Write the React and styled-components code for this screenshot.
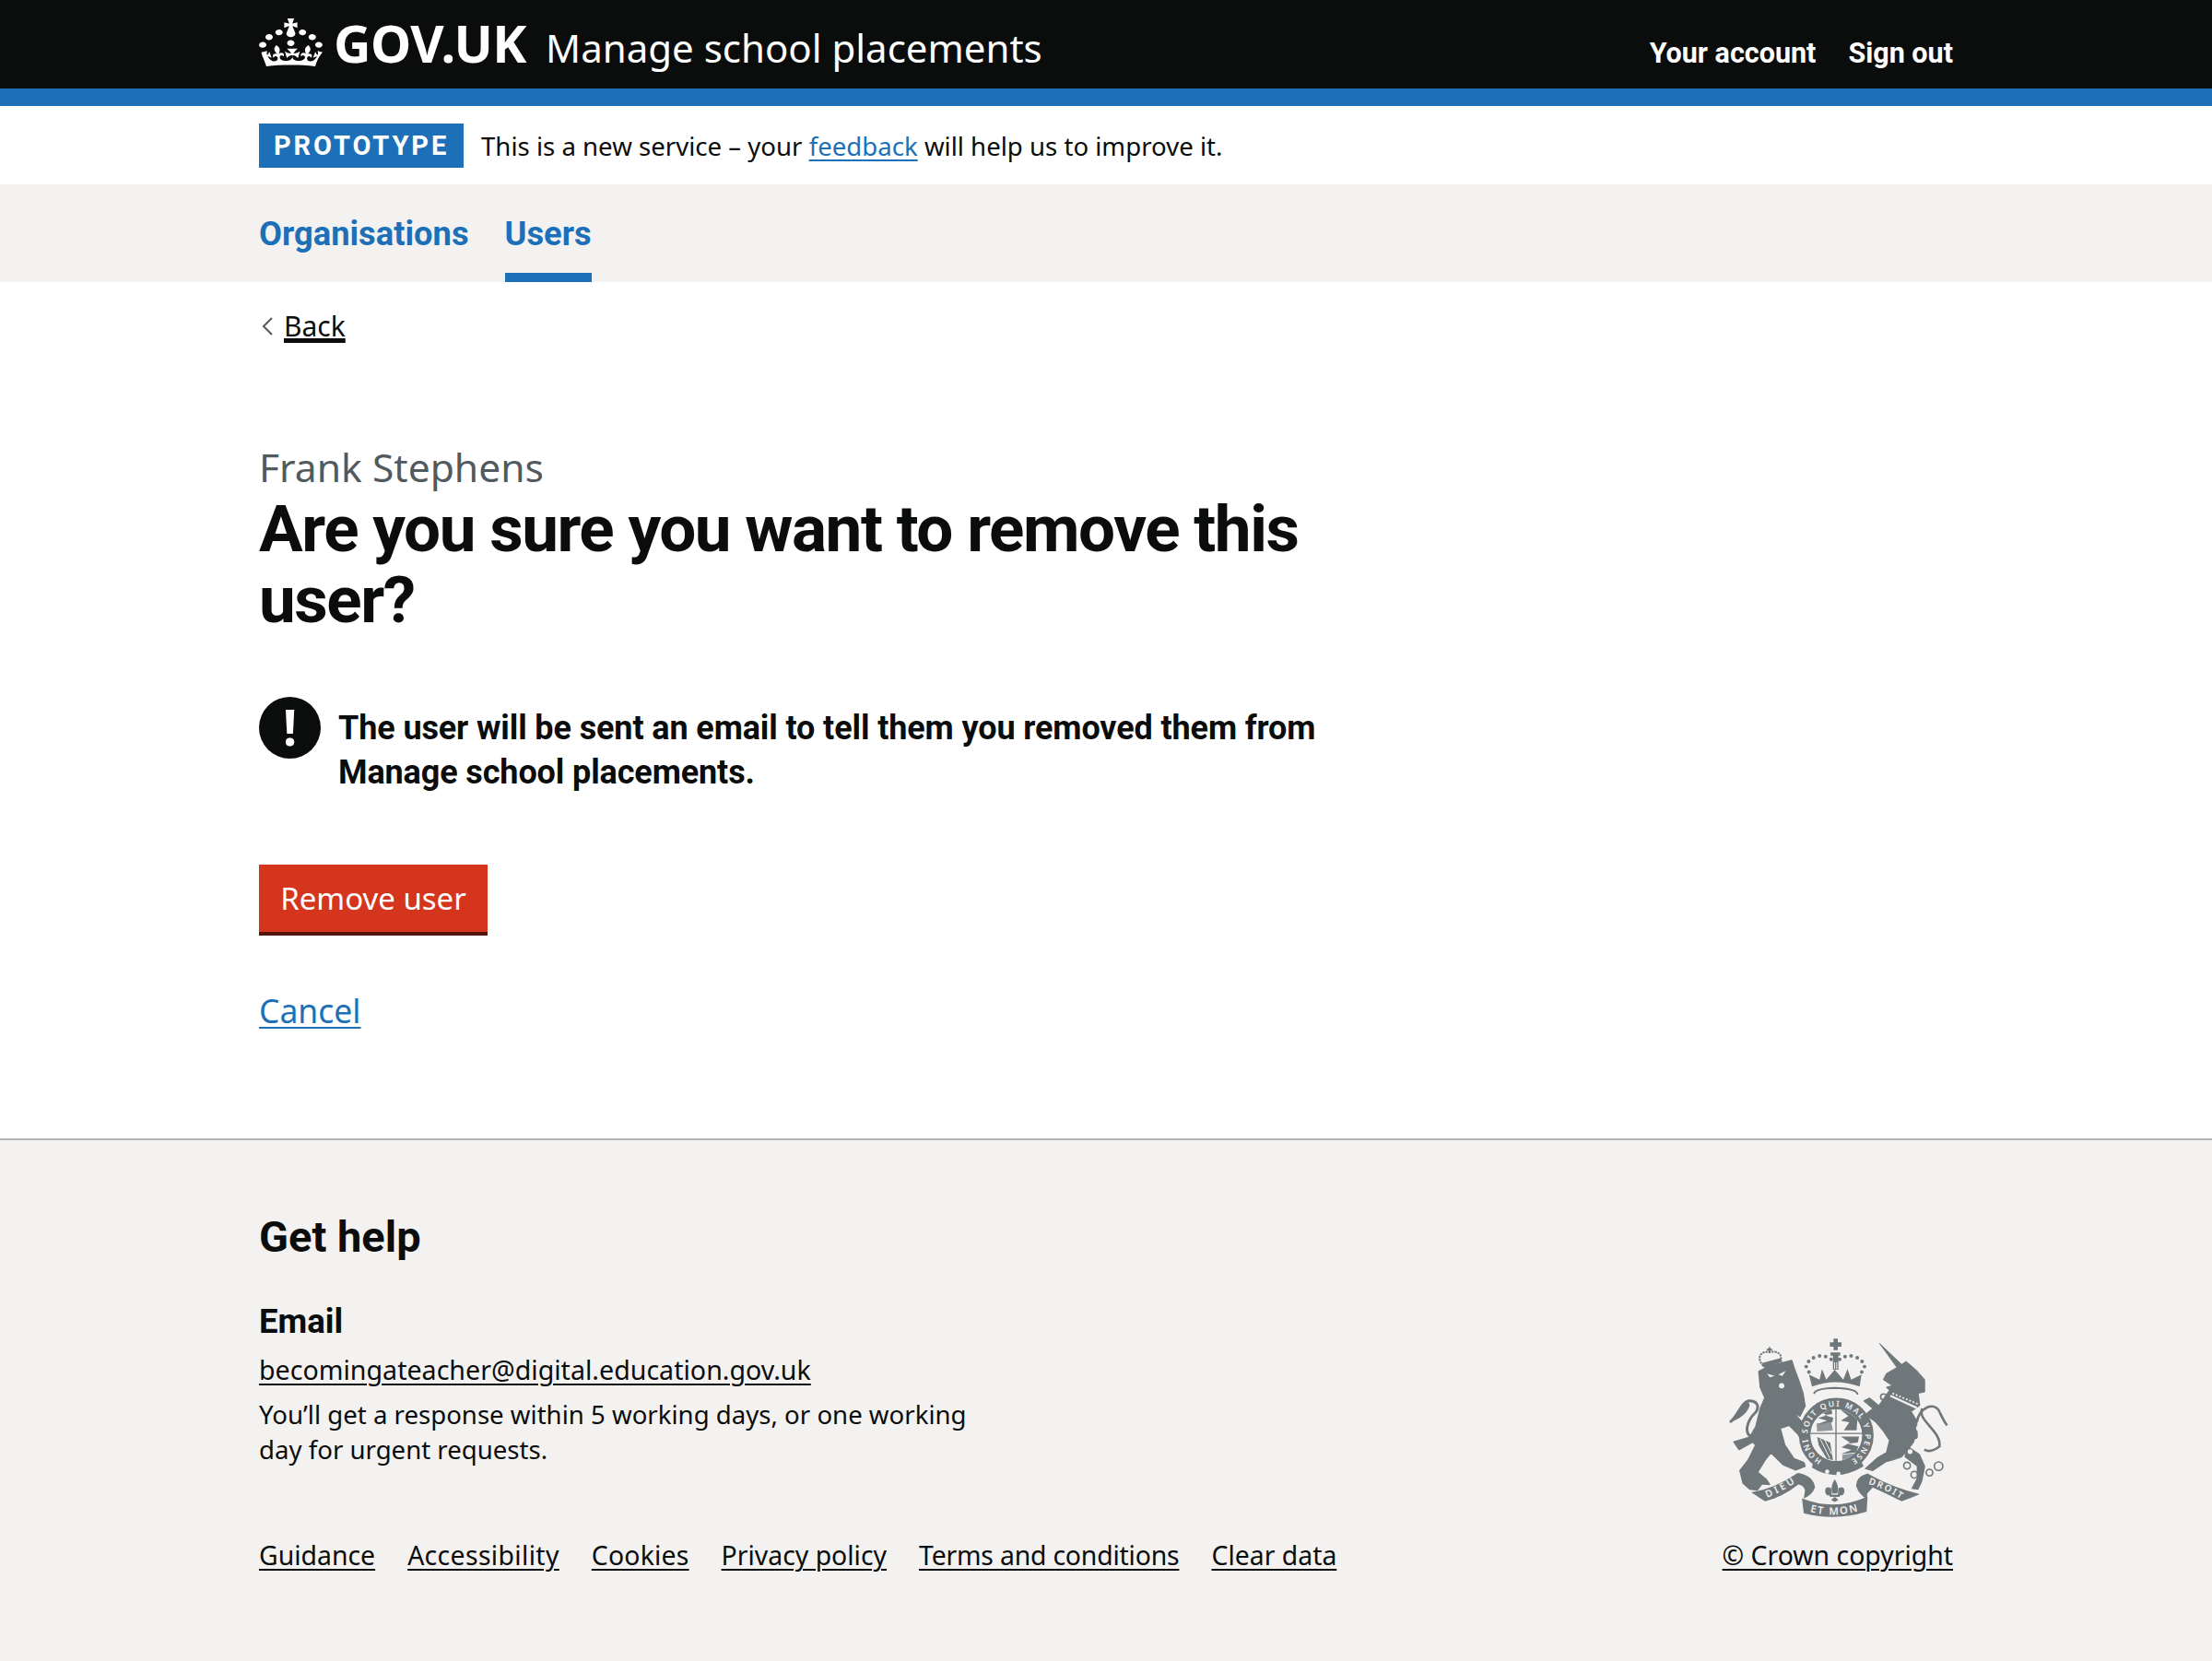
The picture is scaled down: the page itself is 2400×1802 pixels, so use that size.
import React from "react";
import styled, { createGlobalStyle } from "styled-components";

const BOLD = `"Roboto", "Noto Sans", sans-serif`;

const Global = createGlobalStyle`
  html, body { margin: 0; padding: 0; background: #fff; }
  body { font-family: "Noto Sans", "Liberation Sans", sans-serif; color: #0b0c0c; }
  * { box-sizing: border-box; }
`;
const Container = styled.div`
  width: 1838px;
  margin: 0 auto;
`;
const Header = styled.header`
  background: #0b0c0c;
  border-bottom: 19px solid #1d70b8;
  height: 115px;
`;
const HeaderInner = styled(Container)`
  height: 96px;
  display: flex;
  align-items: flex-start;
  justify-content: space-between;
`;
const Brand = styled.div`
  display: flex;
  align-items: flex-start;
  padding-top: 20px;
`;
const CrownSvg = styled.svg`
  width: 69px;
  height: 52px;
  display: block;
  margin-right: 12px;
`;
const LogoText = styled.span`
  font-weight: 700;
  font-size: 56px;
  line-height: 56px;
  color: #fff;
  letter-spacing: -0.5px;
  margin-top: -2px;
`;
const ServiceName = styled.span`
  font-size: 42px;
  line-height: 56px;
  color: #fff;
  margin-left: 21px;
  margin-top: 4px;
`;
const HeaderNav = styled.nav`
  display: flex;
  gap: 35px;
  padding-top: 38px;
`;
const HeaderLink = styled.a`
  font-family: ${BOLD};
  font-size: 30.5px;
  line-height: 40px;
  font-weight: 700;
  color: #fff;
  text-decoration: none;
`;
const PhaseBanner = styled.div`
  height: 85px;
`;
const PhaseInner = styled(Container)`
  height: 85px;
  display: flex;
  align-items: center;
`;
const Tag = styled.strong`
  background: #1d70b8;
  color: #fff;
  width: 222px;
  height: 48px;
  display: flex;
  align-items: center;
  justify-content: center;
  font-family: ${BOLD};
  font-size: 29px;
  font-weight: 700;
  letter-spacing: 2.9px;
  margin-right: 19px;
`;
const PhaseText = styled.span`
  font-size: 27.6px;
  line-height: 40px;
`;
const BlueLink = styled.a`
  color: #1d70b8;
  text-decoration: underline;
  text-underline-offset: 4px;
  text-decoration-thickness: 2px;
`;
const Nav = styled.nav`
  background: #f3f2f1;
  height: 106px;
`;
const NavInner = styled(Container)`
  display: flex;
  gap: 39px;
  height: 106px;
`;
const NavItem = styled.a`
  font-family: ${BOLD};
  font-size: 36.3px;
  font-weight: 700;
  line-height: 48px;
  color: #1d70b8;
  padding-top: 30px;
  height: 106px;
  text-decoration: none;
  border-bottom: 10px solid ${(p) => (p.$active ? "#1d70b8" : "transparent")};
`;
const Main = styled(Container)`
  height: 929px;
  padding-top: 28px;
`;
const BackLink = styled.a`
  display: inline-flex;
  align-items: center;
  font-size: 30px;
  line-height: 40px;
  color: #0b0c0c;
  height: 40px;
`;
const BackChevron = styled.svg`
  width: 15px;
  height: 24px;
  margin: 0 10px 0 2px;
`;
const BackText = styled.span`
  text-decoration: underline;
  text-underline-offset: 5px;
  text-decoration-thickness: 2px;
`;
const Caption = styled.div`
  font-size: 42.6px;
  line-height: 52px;
  color: #505a5f;
  margin-top: 106px;
`;
const Title = styled.h1`
  font-family: ${BOLD};
  font-size: 71px;
  line-height: 76.5px;
  font-weight: 700;
  letter-spacing: -1.45px;
  margin: 4px 0 0;
  width: 1225px;
`;
const Warning = styled.div`
  display: flex;
  gap: 19px;
  margin-top: 67px;
`;
const WarningIcon = styled.div`
  flex: none;
  width: 67px;
  height: 67px;
  border-radius: 50%;
  background: #0b0c0c;
  color: #fff;
  font-size: 54px;
  line-height: 64px;
  font-weight: 700;
  text-align: center;
`;
const WarningText = styled.strong`
  font-family: ${BOLD};
  font-size: 36px;
  line-height: 48px;
  font-weight: 700;
  letter-spacing: -0.12px;
  width: 1100px;
  margin-top: 10px;
`;
const DangerButton = styled.button`
  display: block;
  width: 248px;
  height: 77px;
  margin-top: 76px;
  padding: 0;
  background: #d4351c;
  border: 0;
  border-bottom: 4px solid #55150b;
  color: #fff;
  font-family: inherit;
  font-size: 33px;
  line-height: 40px;
`;
const CancelRow = styled.div`
  margin-top: 59px;
  font-size: 35.5px;
  line-height: 44px;
`;
const Footer = styled.footer`
  background: #f3f2f1;
  border-top: 2px solid #b1b4b6;
  height: 567px;
`;
const FooterInner = styled(Container)`
  padding-top: 79px;
  display: flex;
  justify-content: space-between;
  height: 565px;
`;
const FooterMain = styled.div`
  display: flex;
  flex-direction: column;
`;
const FooterTitle = styled.h2`
  font-family: ${BOLD};
  font-size: 47px;
  line-height: 52px;
  font-weight: 700;
  margin: 0;
`;
const FooterLabel = styled.h3`
  font-family: ${BOLD};
  font-size: 36.6px;
  line-height: 44px;
  font-weight: 700;
  margin: 44px 0 0;
`;
const FooterLink = styled.a`
  color: #0b0c0c;
  text-decoration: underline;
  text-underline-offset: 4px;
  text-decoration-thickness: 2px;
  letter-spacing: ${(p) => p.$track || 0}px;
`;
const EmailLine = styled.div`
  font-size: 28.6px;
  line-height: 38px;
  margin-top: 11px;
`;
const FooterText = styled.p`
  font-size: 27.6px;
  line-height: 38px;
  margin: 10px 0 0;
  width: 800px;
`;
const FooterLinks = styled.div`
  display: flex;
  gap: 35px;
  font-size: 28.4px;
  line-height: 38px;
  margin-top: 77px;
`;
const FooterSide = styled.div`
  display: flex;
  flex-direction: column;
  align-items: center;
  padding-top: 135px;
`;
const Crest = styled.svg`
  width: 240px;
  height: 195px;
  display: block;
`;
const Copyright = styled.div`
  font-size: 28.4px;
  line-height: 38px;
  margin-top: 22px;
`;

const CREST = "#6f777b";
const BG = "#f3f2f1";
const CrestText = styled.text`
  font-family: "Noto Sans", sans-serif;
  font-weight: 600;
  fill: ${BG};
`;

function CrownLogo() {
  return (
    <CrownSvg viewBox="0 0 32 30" preserveAspectRatio="none" aria-hidden="true">
      <path
        fill="#fff"
        d="M22.6 10.4c-1 .4-2-.1-2.4-1-.4-.9.1-2 1-2.4.9-.4 2 .1 2.4 1s-.1 2-1 2.4m-5.9 6.7c-.9.4-2-.1-2.4-1-.4-.9.1-2 1-2.4.9-.4 2 .1 2.4 1s-.1 2-1 2.4m10.8-3.7c-1 .4-2-.1-2.4-1-.4-.9.1-2 1-2.4.9-.4 2 .1 2.4 1s0 2-1 2.4m3.3 4.8c-1 .4-2-.1-2.4-1-.4-.9.1-2 1-2.4.9-.4 2 .1 2.4 1s-.1 2-1 2.4M17 4.7l2.3 1.2V2.5l-2.3.7-.2-.2.9-3h-3.4l.9 3-.2.2c-.1.1-2.3-.7-2.3-.7v3.4L15 4.7c.1.1.1.2.2.2l-1.3 4c-.1.2-.1.4-.1.6 0 1.1.8 2 1.9 2.2h.7c1-.2 1.9-1.1 1.9-2.2 0-.2 0-.4-.1-.6l-1.3-4c-.1-.1 0-.2.1-.2m-7.6 5.7c.9.4 2-.1 2.4-1 .4-.9-.1-2-1-2.4-.9-.4-2 .1-2.4 1s0 2 1 2.4m-5 3c.9.4 2-.1 2.4-1 .4-.9-.1-2-1-2.4-.9-.4-2 .1-2.4 1s.1 2 1 2.4m-3.2 4.8c.9.4 2-.1 2.4-1 .4-.9-.1-2-1-2.4-.9-.4-2 .1-2.4 1s0 2 1 2.4m14.8 11c4.4 0 8.6.3 12.3.8 1.1-4.5 2.4-7 3.7-8.8l-2.5-.9c.2 1.3.3 1.9 0 2.7-.4-.4-.8-1.1-1.1-2.3l-1.2 4c.7-.5 1.3-.8 2-.9-1.1 2.5-2.6 3.1-3.5 3-1.1-.2-1.7-1.2-1.5-2.1.3-1.2 1.5-1.5 2.1-.1 1.1-2.3-.8-3-2-2.3 1.9-1.9 2.1-3.5.6-5.6-2.1 1.6-2.1 3.2-1.2 5.5-1.2-1.4-3.2-.6-2.5 1.6.9-1.4 2.1-.5 1.9.8-.2 1.1-1.7 2.1-3.5 1.9-2.7-.2-2.9-2.1-2.9-3.6.7-.1 1.9.5 2.9 1.9l1-4.3c-1.1 1.1-2.1 1.4-3.2 1.4.4-1.2 2.1-3 2.1-3h-5.4s1.7 1.9 2.1 3c-1.1 0-2.1-.2-3.2-1.4l1 4.3c1-1.4 2.2-2 2.9-1.9-.1 1.5-.2 3.4-2.9 3.6-1.9.2-3.4-.8-3.5-1.9-.2-1.3 1-2.2 1.9-.8.7-2.3-1.2-3-2.5-1.6.9-2.2.9-3.9-1.2-5.5-1.5 2-1.3 3.7.6 5.6-1.2-.7-3.1 0-2 2.3.6-1.4 1.8-1.1 2.1.1.2.9-.3 1.9-1.5 2.1-.9.2-2.4-.5-3.5-3 .6 0 1.2.3 2 .9l-1.2-4c-.3 1.1-.7 1.9-1.1 2.3-.3-.8-.2-1.4 0-2.7l-2.9.9C1.3 23 2.6 25.5 3.7 30c3.7-.5 7.9-.8 12.3-.8"
      />
    </CrownSvg>
  );
}

function RoyalCrest() {
  const dots = [[335,180],[326,162],[334,145],[350,133],[370,127],[390,129],[408,138],[436,138],[454,129],[474,127],[494,133],[510,145],[518,162],[509,180]];
  return (
    <Crest viewBox="70 66 720 592" aria-hidden="true">
      <defs>
        <path id="garterRing" d="M377.5 470.3 A95 95 0 1 1 472.5 470.3" />
        <path id="dieu" d="M197 594 Q250 572 297 540" />
        <path id="etmon" d="M338 640 Q420 662 506 635" />
        <path id="droit" d="M530 548 Q585 565 640 600" />
        <clipPath id="shieldClip">
          <circle cx="425" cy="388" r="85" />
        </clipPath>
      </defs>
      {/* Lion */}
      <path fill={CREST} stroke={CREST} strokeWidth="5" strokeLinejoin="round" d="M170 178 L200 162 L278 142 L285 165 L300 205 L315 250 L322 292 L305 325 L280 310 L330 365 L335 400 L310 405 L300 385 L270 355 L240 365 L255 420 L285 465 L318 478 L322 490 L290 502 L250 485 L210 445 L190 470 L165 510 L195 535 L205 550 L180 548 L165 568 L140 565 L118 545 L108 505 L135 470 L160 420 L150 410 L105 435 L88 410 L140 395 L160 360 L175 300 L190 265 L175 230 Z" />
      <path fill="none" stroke={CREST} strokeWidth="9" d="M150 396 C118 385 130 340 160 312 C175 290 160 272 135 275 C112 280 105 320 75 345" />
      <path fill={CREST} d="M135 275 C105 285 100 315 72 347 C105 335 130 320 140 290 Z" />
      <circle cx="245" cy="225" r="9" fill={BG} />
      <path fill={BG} d="M197 185 L222 193 L206 197 Z M234 188 L258 176 L248 193 Z" />
      {/* Lion crown */}
      <g fill="none" stroke={CREST} strokeWidth="6">
        <path d="M185 160 C160 135 175 108 205 115 C235 105 255 130 235 148 Z" strokeDasharray="7 3" />
        <path d="M205 115 V98 M196 106 H214" />
      </g>
      <path fill={CREST} d="M180 150 L240 134 L248 146 L188 166 Z" />
      {/* Unicorn */}
      <path fill={CREST} stroke={CREST} strokeWidth="3" strokeLinejoin="round" d="M568 86 L640 155 L655 145 L690 175 L716 205 L716 245 L695 250 L700 290 L672 310 L690 340 L692 395 L662 435 L640 460 L610 470 L590 475 L545 505 L520 498 L560 462 L590 445 L600 405 L580 375 L555 345 L520 320 L545 300 L515 275 L535 265 L565 290 L600 240 L590 230 L610 225 L580 205 L590 185 L625 165 Z" />
      <path fill={CREST} d="M655 420 L700 450 L718 490 L708 540 L695 568 L672 565 L690 530 L690 490 L650 460 Z" />
      <path fill="none" stroke={CREST} strokeWidth="8" d="M690 345 C700 295 745 280 762 305 C772 325 780 345 790 355" />
      <path fill="none" stroke={CREST} strokeWidth="8" d="M708 300 C690 340 770 370 765 425 C745 440 730 445 715 435" />
      <path fill="none" stroke={BG} strokeWidth="7" d="M603 258 L690 298" />
      <path fill="none" stroke={BG} strokeWidth="5" strokeDasharray="6 6" d="M610 250 L694 285" />
      <g fill="none" stroke={CREST} strokeWidth="5">
        <circle cx="581" cy="262" r="10" />
        <circle cx="568" cy="342" r="10" />
        <circle cx="658" cy="488" r="11" />
        <circle cx="682" cy="518" r="11" />
        <circle cx="732" cy="511" r="11" />
        <circle cx="762" cy="490" r="14" />
      </g>
      <circle cx="698" cy="365" r="10" fill={BG} />
      <circle cx="690" cy="408" r="8" fill={BG} />
      <circle cx="668" cy="442" r="8" fill={BG} />
      {/* Royal crown */}
      <path fill={CREST} d="M416 70 H430 V82 H442 V96 H430 V108 H416 V96 H404 V82 H416 Z" />
      <path fill={CREST} d="M406 115 H438 V126 H432 V172 H414 V126 H406 Z" />
      <path fill={BG} d="M418 148 H421 V170 H418 Z M425 148 H428 V170 H425 Z" />
      {dots.map(([x, y]) => (
        <circle key={x + "-" + y} cx={x} cy={y} r="6" fill={CREST} />
      ))}
      <path fill={CREST} d="M335 188 L370 205 L378 170 L392 205 L420 172 L448 205 L462 170 L474 205 L508 188 L502 228 Q422 198 345 228 Z" />
      <path fill="none" stroke={CREST} strokeWidth="6" d="M352 252 Q352 234 420 232 Q495 234 495 254" />
      {/* Garter and shield */}
      <circle cx="425" cy="388" r="104" fill="none" stroke={CREST} strokeWidth="38" />
      <path fill={CREST} d="M350 470 Q425 540 505 470 L515 490 Q425 545 345 495 Z" />
      <circle cx="395" cy="508" r="7" fill={BG} />
      <circle cx="432" cy="515" r="7" fill={BG} />
      <CrestText fontSize="26">
        <textPath href="#garterRing" textLength="495">HONI SOIT QUI MAL Y PENSE</textPath>
      </CrestText>
      <g clipPath="url(#shieldClip)">
        <circle cx="425" cy="388" r="85" fill={BG} />
        <path fill="none" stroke={CREST} strokeWidth="4" d="M424 296 V484 M336 382 H514" />
        <g fill={CREST}>
          <path d="M360 305 L408 298 L412 318 L385 322 L415 330 L412 345 L360 352 L395 340 L365 332 L395 322 Z" />
          <path d="M360 350 L408 345 L414 372 L362 376 Z" opacity=".75" />
          <path d="M440 305 L470 300 L495 330 L492 372 L450 372 L468 345 L440 340 L465 325 Z" />
          <path d="M440 392 L500 392 L496 412 L462 416 L498 425 L490 445 L440 450 L475 436 L442 428 L470 412 Z" />
          <path d="M445 452 L484 448 L462 472 L445 476 Z" opacity=".75" />
          <path d="M362 394 L405 412 L414 470 L392 465 L368 425 Z" />
        </g>
        <path fill="none" stroke={BG} strokeWidth="3" d="M372 400 L404 465 M385 400 L410 450 M362 415 L392 465" />
      </g>
      {/* Fleur */}
      <g fill={CREST}>
        <path d="M420 533 Q436 558 428 580 H412 Q404 558 420 533 Z" />
        <path d="M408 562 Q385 552 389 578 Q396 592 410 584 Z" />
        <path d="M432 562 Q455 552 451 578 Q444 592 430 584 Z" />
        <path d="M404 584 H436 V591 H404 Z" />
        <path d="M420 591 L432 601 L420 608 L408 601 Z" />
      </g>
      {/* Motto ribbon */}
      <g fill={CREST}>
        <path d="M145 576 Q220 565 298 512 Q350 520 355 560 Q345 585 318 596 L322 570 Q318 552 300 550 Q250 590 190 606 Z" />
        <path d="M312 596 Q420 640 528 590 L525 640 Q420 672 318 645 Z" />
        <path d="M490 555 Q490 525 528 514 Q610 560 700 582 Q670 595 640 606 Q590 580 545 560 L527 580 L526 598 Q500 585 490 555 Z" />
      </g>
      <CrestText fontSize="32">
        <textPath href="#dieu" textLength="105">DIEU</textPath>
      </CrestText>
      <CrestText fontSize="34">
        <textPath href="#etmon" textLength="160">ET MON</textPath>
      </CrestText>
      <CrestText fontSize="30">
        <textPath href="#droit" textLength="118">DROIT</textPath>
      </CrestText>
    </Crest>
  );
}

export default function App() {
  return (
    <>
      <Global />
      <Header>
        <HeaderInner>
          <Brand>
            <CrownLogo />
            <LogoText>GOV.UK</LogoText>
            <ServiceName>Manage school placements</ServiceName>
          </Brand>
          <HeaderNav>
            <HeaderLink href="#">Your account</HeaderLink>
            <HeaderLink href="#">Sign out</HeaderLink>
          </HeaderNav>
        </HeaderInner>
      </Header>
      <PhaseBanner>
        <PhaseInner>
          <Tag>PROTOTYPE</Tag>
          <PhaseText>
            This is a new service – your <BlueLink href="#">feedback</BlueLink> will help us to improve it.
          </PhaseText>
        </PhaseInner>
      </PhaseBanner>
      <Nav>
        <NavInner>
          <NavItem href="#">Organisations</NavItem>
          <NavItem href="#" $active>Users</NavItem>
        </NavInner>
      </Nav>
      <Main>
        <BackLink href="#">
          <BackChevron viewBox="0 0 15 24" aria-hidden="true">
            <path d="M12 3 L3 12 L12 21" fill="none" stroke="#505a5f" strokeWidth="2" />
          </BackChevron>
          <BackText>Back</BackText>
        </BackLink>
        <Caption>Frank Stephens</Caption>
        <Title>Are you sure you want to remove this user?</Title>
        <Warning>
          <WarningIcon>!</WarningIcon>
          <WarningText>The user will be sent an email to tell them you removed them from Manage school placements.</WarningText>
        </Warning>
        <DangerButton>Remove user</DangerButton>
        <CancelRow>
          <BlueLink href="#">Cancel</BlueLink>
        </CancelRow>
      </Main>
      <Footer>
        <FooterInner>
          <FooterMain>
            <FooterTitle>Get help</FooterTitle>
            <FooterLabel>Email</FooterLabel>
            <EmailLine>
              <FooterLink href="#">becomingateacher@digital.education.gov.uk</FooterLink>
            </EmailLine>
            <FooterText>You’ll get a response within 5 working days, or one working day for urgent requests.</FooterText>
            <FooterLinks>
              <FooterLink href="#">Guidance</FooterLink>
              <FooterLink href="#" $track={0.35}>Accessibility</FooterLink>
              <FooterLink href="#" $track={0.2}>Cookies</FooterLink>
              <FooterLink href="#">Privacy policy</FooterLink>
              <FooterLink href="#" $track={-0.2}>Terms and conditions</FooterLink>
              <FooterLink href="#">Clear data</FooterLink>
            </FooterLinks>
          </FooterMain>
          <FooterSide>
            <RoyalCrest />
            <Copyright>
              <FooterLink href="#">© Crown copyright</FooterLink>
            </Copyright>
          </FooterSide>
        </FooterInner>
      </Footer>
    </>
  );
}
